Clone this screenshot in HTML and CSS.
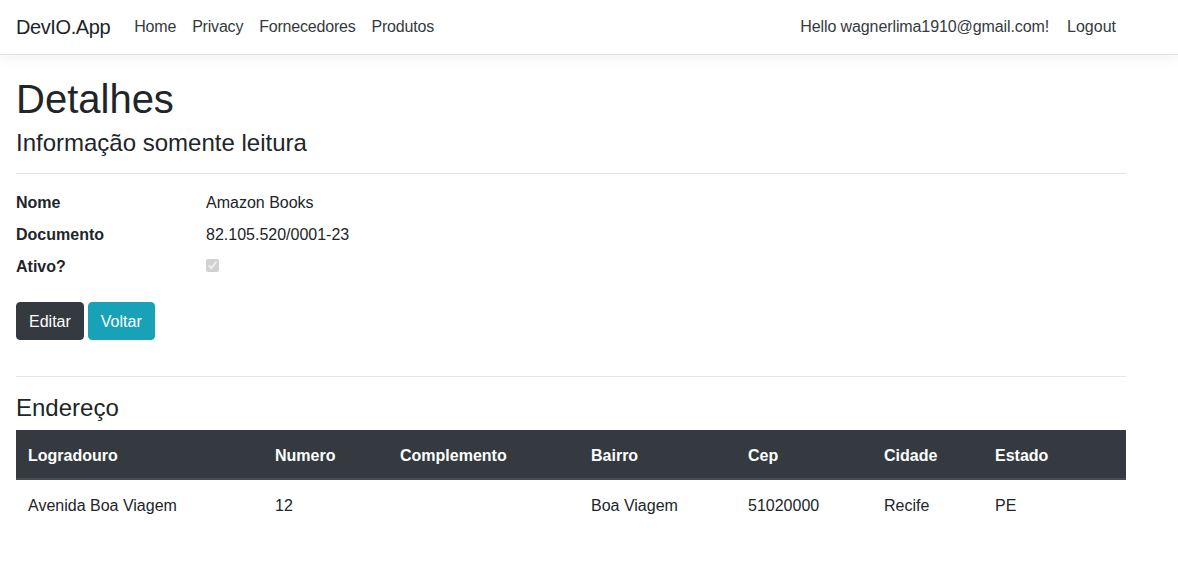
FILE: index.html
```html
<!DOCTYPE html>
<html lang="pt-BR">
<head>
<meta charset="utf-8">
<title>Detalhes - DevIO.App</title>
<link rel="stylesheet" href="styles.css">
</head>
<body>
<header class="navbar">
  <div class="nav-inner">
    <a class="brand" href="#">DevIO.App</a>
    <ul class="nav-links">
      <li><a href="#">Home</a></li>
      <li><a href="#">Privacy</a></li>
      <li><a href="#">Fornecedores</a></li>
      <li><a href="#">Produtos</a></li>
    </ul>
    <div class="nav-user">
      <a class="hello" href="#">Hello wagnerlima1910@gmail.com!</a>
      <button class="logout" type="button">Logout</button>
    </div>
  </div>
</header>
<main class="container">
  <h1 class="title">Detalhes</h1>
  <h4 class="subtitle">Informação somente leitura</h4>
  <hr class="rule">
  <dl class="details">
    <dt>Nome</dt>
    <dd>Amazon Books</dd>
    <dt>Documento</dt>
    <dd>82.105.520/0001-23</dd>
    <dt>Ativo?</dt>
    <dd><input class="check" type="checkbox" checked disabled></dd>
  </dl>
  <div class="actions">
    <a class="btn btn-dark" href="#">Editar</a>
    <a class="btn btn-info" href="#">Voltar</a>
  </div>
  <hr class="rule">
  <h4 class="subtitle">Endereço</h4>
  <table class="table">
    <colgroup>
      <col class="c-log"><col class="c-num"><col class="c-comp"><col class="c-bai"><col class="c-cep"><col class="c-cid"><col class="c-est">
    </colgroup>
    <thead>
      <tr>
        <th>Logradouro</th>
        <th>Numero</th>
        <th>Complemento</th>
        <th>Bairro</th>
        <th>Cep</th>
        <th>Cidade</th>
        <th>Estado</th>
      </tr>
    </thead>
    <tbody>
      <tr>
        <td>Avenida Boa Viagem</td>
        <td>12</td>
        <td></td>
        <td>Boa Viagem</td>
        <td>51020000</td>
        <td>Recife</td>
        <td>PE</td>
      </tr>
    </tbody>
  </table>
</main>
</body>
</html>
```
FILE: styles.css
```css
* { box-sizing: border-box; }
html, body { margin: 0; padding: 0; }
body {
  font-family: "Liberation Sans", Arial, sans-serif;
  font-size: 16px;
  line-height: 24px;
  color: #212529;
  background: #fff;
}
a { text-decoration: none; }

.navbar {
  height: 55px;
  background: #fff;
  border-bottom: 1px solid #dee2e6;
  box-shadow: 0 4px 12px rgba(0, 0, 0, 0.05);
}
.nav-inner {
  max-width: 1142px;
  height: 54px;
  padding: 0 16px;
  display: flex;
  align-items: center;
}
.brand {
  font-size: 20px;
  line-height: 30px;
  color: #212529;
  letter-spacing: -0.4px;
  margin-right: 16px;
}
.nav-links {
  display: flex;
  list-style: none;
  margin: 0;
  padding: 0;
}
.nav-links a {
  display: block;
  padding: 0 8px;
  color: #343a40;
  line-height: 24px;
  letter-spacing: -0.2px;
}
.nav-user {
  margin-left: auto;
  display: flex;
  align-items: center;
}
.hello {
  color: #343a40;
  padding: 0 8px;
  letter-spacing: -0.1px;
}
.logout {
  font: inherit;
  color: #343a40;
  background: none;
  border: 0;
  padding: 0 10px;
  line-height: 24px;
  cursor: pointer;
}

.container {
  max-width: 1142px;
  padding: 20px 16px 16px;
}
.title {
  font-size: 40px;
  line-height: 48px;
  font-weight: 500;
  margin: 0 0 5px;
}
.subtitle {
  font-size: 24px;
  line-height: 26.8px;
  padding-top: 2px;
  font-weight: 500;
  margin: 0 0 8px;
}
.rule {
  border: 0;
  border-top: 1px solid rgba(0, 0, 0, 0.1);
  margin: 16px 0;
  height: 0;
}
.details {
  display: grid;
  grid-template-columns: 190px 1fr;
  row-gap: 8px;
  padding-top: 1px;
  margin: 0 0 23px;
}
.details dt {
  font-weight: 700;
  margin: 0;
}
.details dd {
  margin: 0;
  min-height: 24px;
}
.check {
  display: block;
  width: 13px;
  height: 13px;
  margin: 4px 0 7px;
}
.actions {
  display: flex;
  gap: 4px;
  margin-bottom: 36px;
}
.btn {
  display: inline-block;
  padding: 7px 12px 5px;
  border: 1px solid transparent;
  border-radius: 4px;
  color: #fff;
  line-height: 24px;
}
.btn-dark { background: #343a40; border-color: #343a40; }
.btn-info { background: #17a2b8; border-color: #17a2b8; }

.table {
  width: 100%;
  border-collapse: collapse;
  table-layout: fixed;
  color: #212529;
}
.c-log { width: 247px; }
.c-num { width: 125px; }
.c-comp { width: 191px; }
.c-bai { width: 157px; }
.c-cep { width: 136px; }
.c-cid { width: 111px; }
.c-est { width: 143px; }
.table th {
  background: #343a40;
  color: #fff;
  font-weight: 700;
  text-align: left;
  padding: 14px 12px 10px;
  border-bottom: 2px solid #454d55;
}
.table td {
  padding: 14px 12px 10px;
  border-top: 1px solid #dee2e6;
}
```
